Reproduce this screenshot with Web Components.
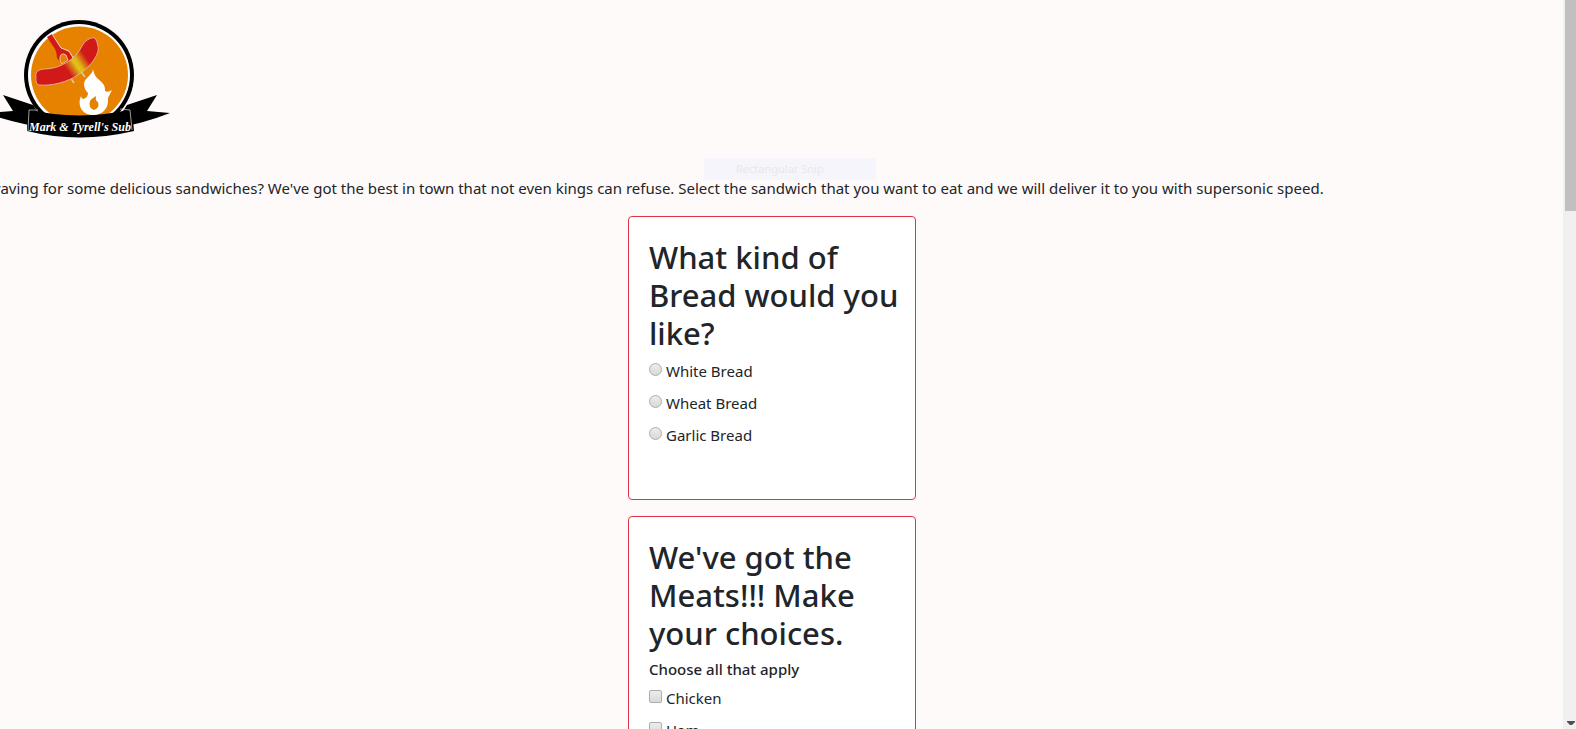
<!DOCTYPE html>
<html lang="en">
<head>
<meta charset="utf-8">
<meta name="viewport" content="width=device-width, initial-scale=1">
<title>Mark &amp; Tyrell's Sub</title>
<style>
  body { margin: 0; background: #fffafa; color: #212529; font: 15px/24px "Noto Sans", "Open Sans", sans-serif; }
</style>
</head>
<body>
<sub-page>
  <sub-logo slot="header"></sub-logo>
  <sub-intro>Craving for some delicious sandwiches? We've got the best in town that not even kings can refuse. Select the sandwich that you want to eat and we will deliver it to you with supersonic speed.</sub-intro>
  <sub-card heading="What kind of Bread would you like?">
    <sub-option type="radio" group="bread">White Bread</sub-option>
    <sub-option type="radio" group="bread">Wheat Bread</sub-option>
    <sub-option type="radio" group="bread">Garlic Bread</sub-option>
  </sub-card>
  <sub-card heading="We've got the Meats!!! Make your choices." hint="Choose all that apply">
    <sub-option type="checkbox" group="meat">Chicken</sub-option>
    <sub-option type="checkbox" group="meat">Ham</sub-option>
  </sub-card>
  <snip-tip slot="overlay">Rectangular Snip</snip-tip>
</sub-page>
<script>
const define = (name, html, setup) => customElements.define(name, class extends HTMLElement {
  constructor() {
    super();
    this.attachShadow({ mode: 'open' }).innerHTML = html;
  }
  connectedCallback() { if (setup) setup(this, this.shadowRoot); }
});

define('sub-logo', `
<style>
  :host { display: block; height: 176px; }
  svg { display: block; }
  text { font: italic bold 12px "Liberation Serif", serif; fill: #fff; }
</style>
<svg width="200" height="160" viewBox="-15 0 200 160" role="img" aria-label="Logo">
  <defs>
    <linearGradient id="sausage" gradientUnits="userSpaceOnUse" x1="67" y1="70" x2="86" y2="57">
      <stop offset="0" stop-color="#d11919"/><stop offset=".45" stop-color="#e0c51a"/>
      <stop offset=".6" stop-color="#e0b515"/><stop offset="1" stop-color="#d11919"/>
    </linearGradient>
  </defs>
  <path d="M3 95 33 105 48 128 Q20 125 -15 113L13 111ZM157 95 127 105 112 128 Q140 125 170 113L147 111Z"/>
  <circle cx="79" cy="75" r="55"/>
  <circle cx="79" cy="75" r="51" fill="#fff"/>
  <circle cx="79.500" cy="75" r="48.500" fill="#e68200"/>
  <path d="M27 109Q79 122 132 109L134 131Q79 144 27 131Z"/>
  <path d="M28 131 29 110H38M120 109 130 110 132 130" fill="none" stroke="#ddd" stroke-width=".7"/>
  <path d="M47 37 52 34 61 48 69 52 76 65 65 70 62 64 57 58Q57 53 55 49Z" fill="#d11919"/>
  <path d="M52 34 61 48 69 51 76 62" fill="none" stroke="#f3d3c2" stroke-width="1"/>
  <path d="M66 55Q61 52 60 57Q59 61 62 64L68 60Z" fill="#e68200" stroke="#f3d3c2" stroke-width=".8"/>
  <path d="M79 69 85 77M70 77 74 83" stroke="#e7c9a5" stroke-width="1.500"/>
  <path d="M36 76C36 79 35 83 39 85C53 86 67 82 78 75C89 68 100 55 98 46Q97 41 95 38C90 37 85 41 82 46C76 59 60 69 45 69C39 69 35 72 36 76Z" fill="url(#sausage)" stroke="#edb9ab" stroke-width=".8"/>
  <path d="M93 69C93 75 84 78 84 84Q84 89 88 93Q88 98 83 99Q81 98 81 96C77 105 82 115 93 115C103 115 109 108 108 98L112 90Q108 93 105 91C106 80 95 82 93 69ZM96 96Q95 101 98 102Q100 108 94 110Q88 108 90 101Q91 99 96 96Z" fill="#fff" fill-rule="evenodd"/>
  <text x="29" y="131">Mark &amp; Tyrell's Sub</text>
</svg>`);

define('sub-intro', `
<style>
  :host { display: block; }
  p { margin: 0 0 16px; }
</style>
<p><slot></slot></p>`);

define('sub-card', `
<style>
  :host { display: block; box-sizing: border-box; width: 288px; min-height: 284px; margin: 0 auto 16px;
          padding: 20px; background: #fff; border: 1px solid #dc3545; border-radius: 4px; }
  h2 { margin: 0 -8px 7px 0; padding-top: 1px; font-size: 31px; line-height: 38px; font-weight: 500; }
  h3 { margin: 0 0 7px; font-size: 15px; line-height: 20px; font-weight: 500; }
  h3:empty { display: none; }
</style>
<h2></h2><h3></h3><slot></slot>`, (el, root) => {
  root.querySelector('h2').textContent = el.getAttribute('heading');
  root.querySelector('h3').textContent = el.getAttribute('hint') || '';
});

define('sub-option', `
<style>
  :host { display: block; margin-bottom: 8px; }
  label { display: flex; align-items: center; gap: 4px; }
  input { appearance: none; box-sizing: border-box; flex: none; width: 13px; height: 13px; margin: 0 0 3px;
          border: 1px solid #adadad; border-radius: 2px; background: linear-gradient(#ececec, #d9d9d9); }
  input[type=radio] { border-radius: 50%; }
  input:checked { background: #555; }
</style>
<label><input><span><slot></slot></span></label>`, (el, root) => {
  const input = root.querySelector('input');
  input.type = el.getAttribute('type');
  input.name = el.getAttribute('group');
});

define('snip-tip', `
<style>
  :host { display: block; position: absolute; top: 158px; left: 704px; box-sizing: border-box;
          width: 172px; height: 22px; padding-left: 32px; background: #f6f5fb; color: #ece7e9;
          font-size: 11px; line-height: 22px; }
</style>
<slot></slot>`);

define('scroll-rail', `
<style>
  :host { display: flex; flex-direction: column; align-items: flex-end; justify-content: space-between;
          width: 13px; background: #f0f0f0; }
  div { width: 11px; height: 29%; background: #c0c0c0; }
  svg { display: block; margin: 0 1px 3px; }
</style>
<div></div>
<svg width="8" height="5" viewBox="0 0 8 5"><path d="M0 0H8V1L5 4H3L0 1Z" fill="#505050"/></svg>`);

define('sub-page', `
<style>
  :host { display: flex; height: 100vh; overflow: hidden; position: relative; }
  main { flex: 1; min-width: 0; overflow: hidden; }
  .row { margin-left: -15px; padding-right: 4px; }
</style>
<main><div class="row"><slot name="header"></slot><slot></slot></div></main>
<slot name="overlay"></slot>
<scroll-rail></scroll-rail>`);
</script>
</body>
</html>
